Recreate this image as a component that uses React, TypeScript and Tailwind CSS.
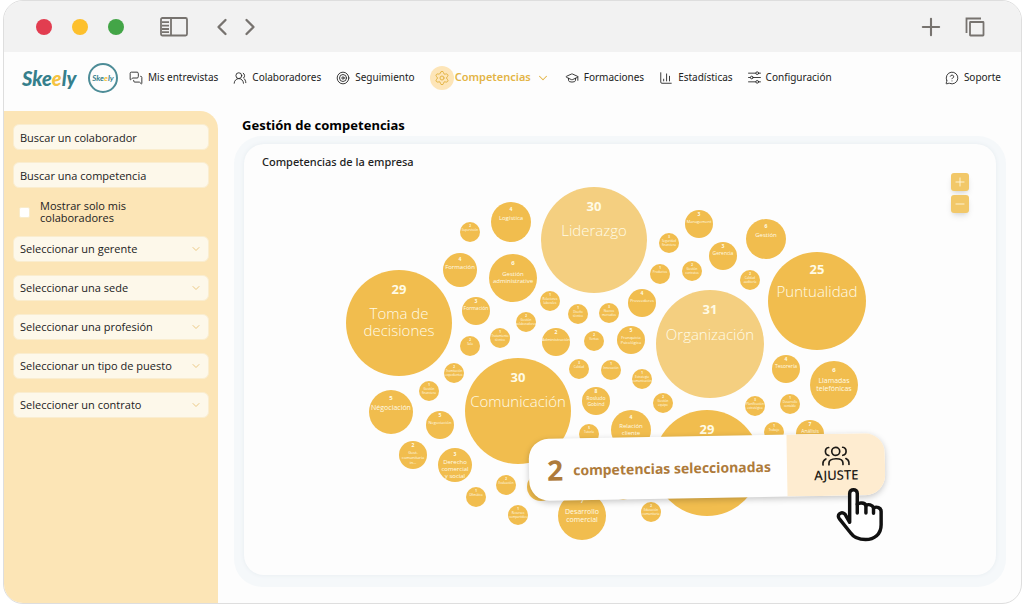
import {
  ChartColumn,
  ChevronDown,
  ChevronLeft,
  ChevronRight,
  GraduationCap,
  MessageCircleQuestion,
  MessagesSquare,
  Minus,
  Plus,
  Settings,
  Target,
  UsersRound,
} from "lucide-react";

type Bubble = {
  x: number;
  y: number;
  r: number;
  count: number;
  lines: string[];
  selected?: boolean;
};

const bubbles: Bubble[] = [
  { x: 399, y: 323, r: 53, count: 29, lines: ["Toma de", "decisiones"] },
  { x: 594, y: 240, r: 53, count: 30, lines: ["Liderazgo"], selected: true },
  { x: 710, y: 344, r: 54, count: 31, lines: ["Organización"], selected: true },
  { x: 817, y: 301, r: 49, count: 25, lines: ["Puntualidad"] },
  { x: 518, y: 411, r: 53, count: 30, lines: ["Comunicación"] },
  { x: 707, y: 463, r: 53, count: 29, lines: [] },
  { x: 511, y: 222, r: 20, count: 4, lines: ["Logística"] },
  { x: 470, y: 232, r: 10, count: 2, lines: ["Supervisión"] },
  { x: 460, y: 270, r: 17, count: 4, lines: ["Formación"] },
  { x: 513, y: 278, r: 24, count: 6, lines: ["Gestión", "administrative"] },
  { x: 476, y: 311, r: 14, count: 3, lines: ["Formación"] },
  { x: 526, y: 322, r: 10, count: 2, lines: ["Gestión", "colaboradores"] },
  { x: 500, y: 338, r: 10, count: 1, lines: ["Tratamiento", "técnico"] },
  { x: 470, y: 346, r: 10, count: 2, lines: ["Sala"] },
  { x: 454, y: 373, r: 10, count: 2, lines: ["Tramitación", "expedientes"] },
  { x: 699, y: 224, r: 14, count: 3, lines: ["Management"] },
  { x: 669, y: 243, r: 10, count: 3, lines: ["Seguridad", "financiera"] },
  { x: 723, y: 256, r: 14, count: 3, lines: ["Gerencia"] },
  { x: 660, y: 274, r: 10, count: 1, lines: ["Productos"] },
  { x: 692, y: 271, r: 10, count: 2, lines: ["Gestión", "contratos"] },
  { x: 750, y: 280, r: 10, count: 2, lines: ["Calidad", "auditoría"] },
  { x: 766, y: 239, r: 20, count: 6, lines: ["Gestión"] },
  { x: 550, y: 301, r: 10, count: 1, lines: ["Relaciones", "laborales"] },
  { x: 578, y: 314, r: 10, count: 1, lines: ["Diseño", "técnico"] },
  { x: 609, y: 313, r: 10, count: 3, lines: ["Nuevos", "mercados"] },
  { x: 642, y: 303, r: 14, count: 4, lines: ["Proveedores"] },
  { x: 556, y: 342, r: 14, count: 2, lines: ["Administración"] },
  { x: 594, y: 341, r: 10, count: 2, lines: ["Ventas"] },
  { x: 631, y: 340, r: 14, count: 5, lines: ["Franquicia", "Psicológica"] },
  { x: 429, y: 391, r: 10, count: 1, lines: ["Gestión", "financiera"] },
  { x: 391, y: 412, r: 22, count: 5, lines: ["Négociación"] },
  { x: 440, y: 425, r: 14, count: 5, lines: ["Negociación"] },
  { x: 413, y: 455, r: 14, count: 2, lines: ["Gest.", "comunitaria", "in..."] },
  { x: 455, y: 465, r: 17, count: 3, lines: ["Derecho", "comercial", "y social"] },
  { x: 506, y: 485, r: 10, count: 2, lines: ["Evaluación"] },
  { x: 476, y: 497, r: 10, count: 1, lines: ["Ofimática"] },
  { x: 518, y: 515, r: 10, count: 1, lines: ["Recursos", "compartidos"] },
  { x: 541, y: 487, r: 14, count: 2, lines: [] },
  { x: 623, y: 490, r: 10, count: 2, lines: [] },
  { x: 579, y: 369, r: 10, count: 3, lines: ["Calidad"] },
  { x: 611, y: 370, r: 10, count: 1, lines: ["Innovación"] },
  { x: 642, y: 379, r: 10, count: 1, lines: ["Estrategia", "comunicación"] },
  { x: 596, y: 401, r: 14, count: 8, lines: ["Rosludo", "Gobind"] },
  { x: 663, y: 403, r: 10, count: 2, lines: ["Gestión", "equipo"] },
  { x: 631, y: 430, r: 20, count: 4, lines: ["Relación", "cliente"] },
  { x: 589, y: 434, r: 10, count: 5, lines: ["Tutoría"] },
  { x: 582, y: 516, r: 24, count: 7, lines: ["Desarrollo", "comercial"] },
  { x: 651, y: 512, r: 10, count: 2, lines: ["Educación", "comunitaria"] },
  { x: 755, y: 406, r: 10, count: 3, lines: ["Planificación", "estratégica"] },
  { x: 786, y: 369, r: 14, count: 4, lines: ["Tesorería"] },
  { x: 834, y: 385, r: 24, count: 6, lines: ["Llamadas", "telefónicas"] },
  { x: 790, y: 404, r: 10, count: 1, lines: ["Desarrollo", "contable"] },
  { x: 774, y: 432, r: 10, count: 1, lines: ["Trabajo"] },
  { x: 810, y: 434, r: 14, count: 7, lines: ["Análisis"] },
];

const labelSize = ({ r, lines }: Bubble) => {
  if (r > 40) return 15;
  // long words only fit the smaller bubbles at a reduced size
  if (r > 20) return lines.some((line) => line.length > 12) ? 6 : 7;
  if (r > 16) return 6;
  if (r > 12) return lines.some((line) => line.length > 9) ? 4 : 5;
  return 3;
};

const countSize = (r: number) => {
  if (r > 40) return 13;
  if (r > 20) return 6;
  if (r > 12) return 5;
  return 3;
};

const selects = [
  "Seleccionar un gerente",
  "Seleccionar una sede",
  "Seleccionar una profesión",
  "Seleccionar un tipo de puesto",
  "Seleccioner un contrato",
];

function SlidersIcon() {
  return (
    <svg width="13" height="13" viewBox="0 0 24 24" fill="none" stroke="currentColor" strokeWidth="1.6" strokeLinecap="round">
      <path d="M1 4h13M20 4h3M1 12h3M10 12h13M1 20h13M20 20h3" />
      <circle cx="17" cy="4" r="2.5" />
      <circle cx="7" cy="12" r="2.5" />
      <circle cx="17" cy="20" r="2.5" />
    </svg>
  );
}

function SidebarIcon() {
  return (
    <svg width="28" height="20" viewBox="0 0 28 20" fill="none" stroke="#77736f" strokeWidth="1.8">
      <rect x="1" y="1" width="26" height="17.5" rx="1.5" />
      <path d="M11 1v17.5M2 5.2h7M2 8.6h7M2 12h7M2 15.2h7" />
    </svg>
  );
}

function CopyIcon() {
  return (
    <svg width="20" height="20" viewBox="0 0 20 20" fill="none" stroke="#77736f" strokeWidth="1.8">
      <path d="M1.5 16V1.5H16" />
      <rect x="5" y="5" width="13.5" height="13.5" rx="0.5" />
    </svg>
  );
}

function TeamIcon() {
  return (
    <svg width="28" height="20" viewBox="0 0 84 60" fill="none" stroke="#1d1a16" strokeWidth="5" strokeLinecap="round">
      <circle cx="42" cy="17" r="12" />
      <path d="M21 5c-7 1-10 7-10 12s4 11 10 12M63 5c7 1 10 7 10 12s-4 11-10 12" />
      <path d="M21 57v-5c0-8 8-13 21-13s21 5 21 13v5" />
      <path d="M3 57v-5c0-6 3-10 9-13M81 57v-5c0-6-3-10-9-13" />
    </svg>
  );
}

function HandCursor() {
  return (
    <svg
      className="absolute top-[84%] left-[89%]"
      width="50"
      height="56"
      viewBox="405 430 144 162"
      fill="#fff"
      stroke="#111"
      strokeWidth="10"
      strokeLinejoin="round"
      strokeLinecap="round"
    >
      <path d="M450 532V449c0-15 22-15 22 0v31c5-6 22-5 25 3c7-4 19-2 22 7c9-4 22-1 22 11v38c0 28-20 43-45 43c-19 0-34-6-43-19l-32-40c-11-13 5-24 15-15z" />
      <path d="M472 480v25M497 483v22M519 490v16" fill="none" />
    </svg>
  );
}

function Skeely({ className }: { className: string }) {
  return (
    <span className={className}>
      Ske<span className="text-[#f5c342]">e</span>ly
    </span>
  );
}

function BubbleChart() {
  return (
    <svg viewBox="346 180 548 365" className="block w-full font-['Open_Sans',sans-serif]" textAnchor="middle" fill="#fffbe6">
      {bubbles.map((b) => {
        const size = labelSize(b);
        return (
          <g key={`${b.x}-${b.y}`}>
            <circle cx={b.x} cy={b.y} r={b.r} fill={b.selected ? "#f4cf80" : "#f1bd4e"} />
            <text x={b.x} y={Math.round(b.y - b.r * 0.55)} fontSize={countSize(b.r)} fontWeight="700">
              {b.count}
            </text>
            {b.lines.map((line, i) => (
              <text
                key={line}
                x={b.x}
                y={Math.round(b.y - b.r * 0.08) + i * (b.r > 40 ? size + 2 : size + 1)}
                fontSize={size}
                fontWeight={b.r > 40 ? 360 : 400}
              >
                {line}
              </text>
            ))}
          </g>
        );
      })}
    </svg>
  );
}

export default function App() {
  return (
    <div className="min-h-screen bg-white pl-[3px] pr-[2px] pb-px flex flex-col font-['Open_Sans',sans-serif] text-[11px] text-[#222]">
      <div className="flex-1 flex flex-col overflow-hidden rounded-[20px] border border-[#dedede] bg-[#fdfdfd]">
        {/* Window bar */}
        <div className="h-[51px] shrink-0 bg-[#f2f2f2] flex items-center pl-8 pr-9 pt-px">
          <div className="flex gap-5">
            <span className="size-4 rounded-full bg-[#e23d50]" />
            <span className="size-4 rounded-full bg-[#fdc02d]" />
            <span className="size-4 rounded-full bg-[#43a547]" />
          </div>
          <button aria-label="Barra lateral" className="ml-9">
            <SidebarIcon />
          </button>
          <button aria-label="Atrás" className="ml-5">
            <ChevronLeft size={28} strokeWidth={2} color="#77736f" />
          </button>
          <button aria-label="Adelante">
            <ChevronRight size={28} strokeWidth={2} color="#77736f" />
          </button>
          <button aria-label="Nueva pestaña" className="ml-auto">
            <Plus size={28} strokeWidth={1.8} color="#77736f" />
          </button>
          <button aria-label="Pestañas" className="ml-5">
            <CopyIcon />
          </button>
        </div>

        {/* Navigation */}
        <header className="h-[59px] shrink-0 flex items-center pl-[18px] pr-5 pb-2 whitespace-nowrap font-['Noto_Sans',sans-serif] text-[10px]">
          <Skeely className="w-[55px] font-['Lato'] text-[20px] font-black italic text-[#357f8c]" />
          <span className="ml-[11px] size-[30px] shrink-0 rounded-full border-2 border-[#4d8c97] flex items-center justify-center">
            <Skeely className="font-['Lato'] text-[8px] font-bold italic text-[#357f8c]" />
          </span>
          <nav className="ml-[11px] flex items-center gap-[15px]">
            <a href="#" className="flex items-center gap-[5px]">
              <MessagesSquare size={14} strokeWidth={1.5} />
              Mis entrevistas
            </a>
            <a href="#" className="flex items-center gap-[5px]">
              <UsersRound size={14} strokeWidth={1.5} />
              Colaboradores
            </a>
            <a href="#" className="flex items-center gap-[5px]">
              <Target size={14} strokeWidth={1.5} />
              Seguimiento
            </a>
            <a href="#" className="flex items-center text-[11px] font-semibold text-[#e3b445]">
              <span className="mr-px size-6 rounded-full bg-[#fde5b8] flex items-center justify-center">
                <Settings size={16} strokeWidth={1.5} />
              </span>
              Competencias
              <ChevronDown size={14} strokeWidth={1.8} className="ml-[5px]" />
            </a>
            <a href="#" className="flex items-center gap-[5px]">
              <GraduationCap size={14} strokeWidth={1.5} />
              Formaciones
            </a>
            <a href="#" className="flex items-center gap-[5px]">
              <ChartColumn size={14} strokeWidth={1.5} />
              Estadísticas
            </a>
            <a href="#" className="flex items-center gap-[5px]">
              <SlidersIcon />
              Configuración
            </a>
          </nav>
          <a href="#" className="ml-auto flex items-center gap-[5px]">
            <MessageCircleQuestion size={14} strokeWidth={1.5} />
            Soporte
          </a>
        </header>

        <div className="flex-1 flex">
          {/* Filters */}
          <aside className="w-[214px] shrink-0 rounded-tr-[18px] bg-[#fce5b6] px-[9px] pt-[13px]">
            <form>
              <div className="flex flex-col gap-3">
                <input
                  type="text"
                  aria-label="Buscar un colaborador"
                  placeholder="Buscar un colaborador"
                  className="h-[26px] w-full rounded-md border border-[#faedcf] bg-[#fdf8ea] px-1.5 placeholder:text-[#222] placeholder:opacity-100"
                />
                <input
                  type="text"
                  aria-label="Buscar una competencia"
                  placeholder="Buscar una competencia"
                  className="h-[26px] w-full rounded-md border border-[#faedcf] bg-[#fdf8ea] px-1.5 placeholder:text-[#222] placeholder:opacity-100"
                />
              </div>
              <label className="my-3 flex items-center gap-2.5 pl-1.5 leading-[12px]">
                <input type="checkbox" className="size-[11px] shrink-0 appearance-none rounded-[2px] border border-[#f9eccc] bg-white" />
                <span className="w-[110px]">Mostrar solo mis colaboradores</span>
              </label>
              <div className="flex flex-col gap-[13px]">
                {selects.map((name) => (
                  <div key={name} className="relative">
                    <select
                      aria-label={name}
                      className="block h-[26px] w-full appearance-none rounded-md border border-[#faedcf] bg-[#fdf8ea] px-1.5"
                    >
                      <option>{name}</option>
                    </select>
                    <ChevronDown
                      size={12}
                      strokeWidth={2}
                      color="#ecc984"
                      className="pointer-events-none absolute top-[7px] right-[7px]"
                    />
                  </div>
                ))}
              </div>
            </form>
          </aside>

          {/* Content */}
          <main className="flex-1 flex flex-col pl-4 pr-[15px] pb-4 pt-[5px] font-['Noto_Sans',sans-serif]">
            <h1 className="pl-2 text-[13px] leading-[18px] font-bold text-black">
              Gestión de competencias
            </h1>
            <div className="mt-0.5 flex-1 flex flex-col rounded-[28px] bg-[#f5f8fa] px-[10px] pt-2 pb-3">
              <section className="relative flex-1 rounded-[20px] bg-[#fdfdfd] pt-2.5 shadow-[0_0_4px_#e6ecf0]">
                <h2 className="pl-[18px] leading-[16px] font-medium">Competencias de la empresa</h2>
                <div className="absolute top-[29px] right-[27px] flex flex-col gap-1">
                  <button aria-label="Acercar" className="size-[18px] rounded-[3px] bg-[#f2c869] text-[#fff8e0] shadow-md flex items-center justify-center">
                    <Plus size={14} strokeWidth={1.5} />
                  </button>
                  <button aria-label="Alejar" className="size-[18px] rounded-[3px] bg-[#f2c869] text-[#fff8e0] shadow-md flex items-center justify-center">
                    <Minus size={14} strokeWidth={1.5} />
                  </button>
                </div>
                <div className="relative mx-auto mt-2.5 w-full max-w-[548px]">
                  <BubbleChart />
                  <div className="absolute top-[70%] left-1/3 h-[62px] w-[65%] -rotate-1 flex rounded-[20px] bg-[#fefefe] shadow-[0_2px_6px_rgba(0,0,0,0.22)] overflow-hidden">
                    <p className="flex-1 flex items-center gap-2.5 pl-[18px] whitespace-nowrap text-[14px] font-bold text-[#ae7b3b]">
                      <span className="text-[28px]">2</span>
                      competencias seleccionadas
                    </p>
                    <button className="w-[98px] bg-[#feecd0] flex flex-col items-center justify-center text-[13px] leading-[18px] font-medium text-[#1d1a16]">
                      <TeamIcon />
                      AJUSTE
                    </button>
                  </div>
                  <HandCursor />
                </div>
              </section>
            </div>
          </main>
        </div>
      </div>
    </div>
  );
}
